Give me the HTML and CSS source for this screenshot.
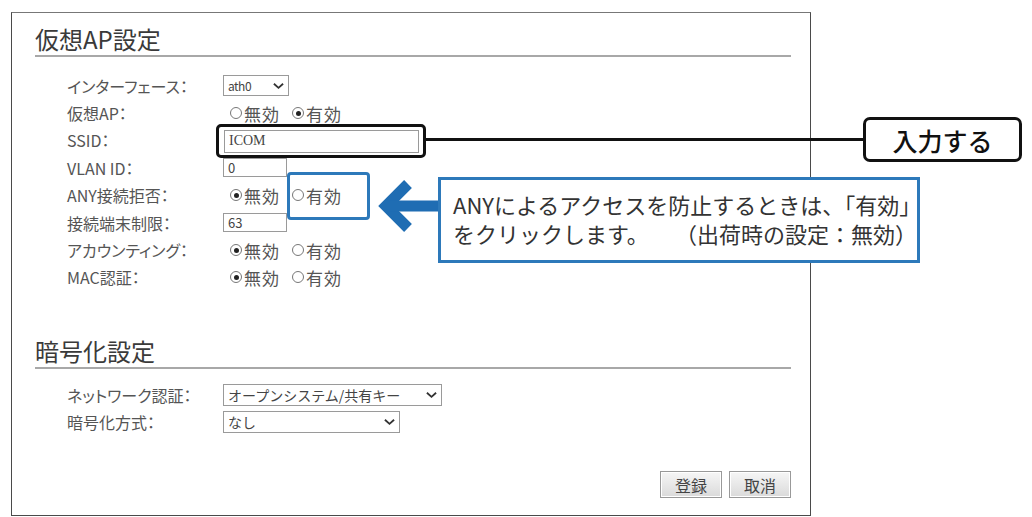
FILE: index.html
```html
<!DOCTYPE html>
<html lang="ja">
<head>
    <meta charset="UTF-8">
    <title>仮想AP設定</title>
    <link rel="stylesheet" href="styles.css">
</head>
<body>
<div class="page">
    <div class="panel">
        <section class="group">
            <h2 class="title">仮想AP設定</h2>
            <div class="rows">
                <div class="row">
                    <span class="label">インターフェース：</span>
                    <span class="select sel-if">ath0<svg class="caret" viewBox="0 0 12 8"><path d="M1 1.5 L6 6 L11 1.5"/></svg></span>
                </div>
                <div class="row">
                    <span class="label">仮想AP：</span>
                    <span class="radios">
                        <span class="opt"><i class="radio"></i>無効</span>
                        <span class="opt"><i class="radio on"></i>有効</span>
                    </span>
                </div>
                <div class="row">
                    <span class="label">SSID：</span>
                    <span class="mark-black"><span class="input ssid">ICOM</span></span>
                </div>
                <div class="row">
                    <span class="label">VLAN ID：</span>
                    <span class="input short">0</span>
                </div>
                <div class="row">
                    <span class="label">ANY接続拒否：</span>
                    <span class="radios">
                        <span class="opt"><i class="radio on"></i>無効</span>
                        <span class="opt mark-blue"><i class="radio"></i>有効</span>
                    </span>
                </div>
                <div class="row">
                    <span class="label">接続端末制限：</span>
                    <span class="input short">63</span>
                </div>
                <div class="row">
                    <span class="label">アカウンティング：</span>
                    <span class="radios">
                        <span class="opt"><i class="radio on"></i>無効</span>
                        <span class="opt"><i class="radio"></i>有効</span>
                    </span>
                </div>
                <div class="row">
                    <span class="label">MAC認証：</span>
                    <span class="radios">
                        <span class="opt"><i class="radio on"></i>無効</span>
                        <span class="opt"><i class="radio"></i>有効</span>
                    </span>
                </div>
            </div>
        </section>

        <section class="group enc">
            <h2 class="title">暗号化設定</h2>
            <div class="rows">
                <div class="row">
                    <span class="label">ネットワーク認証：</span>
                    <span class="select sel-auth">オープンシステム/共有キー<svg class="caret" viewBox="0 0 12 8"><path d="M1 1.5 L6 6 L11 1.5"/></svg></span>
                </div>
                <div class="row">
                    <span class="label">暗号化方式：</span>
                    <span class="select sel-enc">なし<svg class="caret" viewBox="0 0 12 8"><path d="M1 1.5 L6 6 L11 1.5"/></svg></span>
                </div>
            </div>
        </section>

        <div class="actions">
            <button class="btn" type="button">登録</button>
            <button class="btn" type="button">取消</button>
        </div>
    </div>

    <!-- annotations -->
    <div class="connector"></div>
    <div class="tag">入力する</div>
    <svg class="arrow" viewBox="0 0 64 50">
        <polyline points="34,3 12,25 34,47"/>
        <line x1="16" y1="25" x2="64" y2="25"/>
    </svg>
    <div class="callout">
        <p>ANYによるアクセスを防止するときは、「有効」</p>
        <p class="split"><span>をクリックします。</span><span>（出荷時の設定：無効）</span></p>
    </div>
</div>
</body>
</html>
```

FILE: styles.css
```css
body {
    margin: 0;
    background: #fff;
    font-family: "Noto Sans CJK JP", "Noto Sans", sans-serif;
}

.page {
    position: relative;
    width: 1032px;
    height: 517px;
    overflow: hidden;
}

.panel {
    margin: 12px 0 0 11px;
    width: 800px;
    height: 504px;
    box-sizing: border-box;
    border: 1px solid #4a4a4a;
    border-top-color: #777;
    padding: 12px 19px 17px 23px;
    display: flex;
    flex-direction: column;
}

.title {
    margin: 0;
    font-size: 24px;
    font-weight: normal;
    line-height: 28px;
    color: #3a3a3a;
    padding-bottom: 2px;
    border-bottom: 2px solid #a8a8a8;
}

.rows {
    margin-top: 15px;
    padding-left: 32px;
    display: grid;
    grid-auto-rows: 27.4px;
}

.row {
    display: flex;
    align-items: center;
    font-size: 15px;
    color: #555;
}

.label {
    width: 156px;
    flex: none;
    font-size: 16px;
    font-feature-settings: "palt";
}

.radios {
    display: flex;
    gap: 12px;
    margin-left: 7px;
    font-size: 17px;
    letter-spacing: 1px;
}

.opt {
    display: inline-flex;
    align-items: center;
    position: relative;
}

.radio {
    width: 12px;
    height: 12px;
    border: 1px solid #777;
    border-radius: 50%;
    margin-right: 2px;
    box-sizing: border-box;
    position: relative;
    background: #fff;
}

.radio.on::after {
    content: "";
    position: absolute;
    left: 2.5px;
    top: 2.5px;
    width: 5px;
    height: 5px;
    border-radius: 50%;
    background: #222;
}

.input, .select {
    display: inline-flex;
    align-items: center;
    box-sizing: border-box;
    border: 1px solid #9a9a9a;
    height: 21px;
    padding: 0 4px;
    font-size: 13px;
    color: #444;
    background: #fff;
    letter-spacing: 0;
}

.input.ssid {
    width: 195px;
    height: 23px;
    font-family: "Liberation Serif", serif;
    font-size: 14px;
}

.input.short {
    width: 64px;
    height: 19px;
}

.select {
    justify-content: space-between;
}

.sel-if {
    width: 66px;
    font-size: 12px;
    letter-spacing: -0.5px;
}

.sel-auth {
    width: 219px;
    height: 22px;
    font-size: 14px;
}

.sel-enc {
    width: 177px;
    height: 22px;
    font-size: 14px;
}

.caret {
    width: 11px;
    height: 8px;
    fill: none;
    stroke: #333;
    stroke-width: 2;
}

.enc {
    margin-top: 46px;
}

.enc .rows {
    margin-top: 12px;
    grid-auto-rows: 27px;
}

.actions {
    margin-top: auto;
    display: flex;
    justify-content: flex-end;
    gap: 7px;
}

.btn {
    width: 62px;
    height: 27px;
    border: 1px solid #999;
    background: linear-gradient(#f6f6f6, #dadada);
    font-family: "Noto Sans CJK JP", sans-serif;
    font-size: 16px;
    color: #444;
    padding: 0;
    box-shadow: inset 0 0 0 1px #fff;
}

/* annotation marks */
.mark-black {
    position: relative;
    margin-left: 1px;
}

.mark-black::after {
    content: "";
    position: absolute;
    left: -8px;
    right: -7px;
    top: -4px;
    bottom: -5px;
    border: 3px solid #111;
    border-radius: 5px;
}

.mark-blue::after {
    content: "";
    position: absolute;
    left: -5px;
    right: -28px;
    top: -11px;
    bottom: -12px;
    border: 3px solid #2d79ba;
    border-radius: 4px;
}

.connector {
    position: absolute;
    left: 424px;
    top: 138px;
    width: 440px;
    height: 3px;
    background: #111;
}

.tag {
    position: absolute;
    left: 863px;
    top: 117px;
    width: 159px;
    height: 45px;
    box-sizing: border-box;
    border: 3px solid #111;
    border-radius: 7px;
    background: #fff;
    display: flex;
    align-items: center;
    justify-content: center;
    font-size: 25px;
    font-weight: 500;
    color: #111;
}

.arrow {
    position: absolute;
    left: 374px;
    top: 181px;
    width: 64px;
    height: 50px;
    overflow: visible;
    fill: none;
    stroke: #1f6db3;
    stroke-width: 11;
}

.callout {
    position: absolute;
    left: 438px;
    top: 177px;
    width: 482px;
    height: 86px;
    box-sizing: border-box;
    border: 3px solid #2d79ba;
    background: #fff;
    padding: 10px 0 0 12px;
    font-size: 22px;
    line-height: 29px;
    color: #333;
}

.callout p {
    margin: 0;
    white-space: nowrap;
}

.callout .split {
    display: flex;
    justify-content: space-between;
}
```
